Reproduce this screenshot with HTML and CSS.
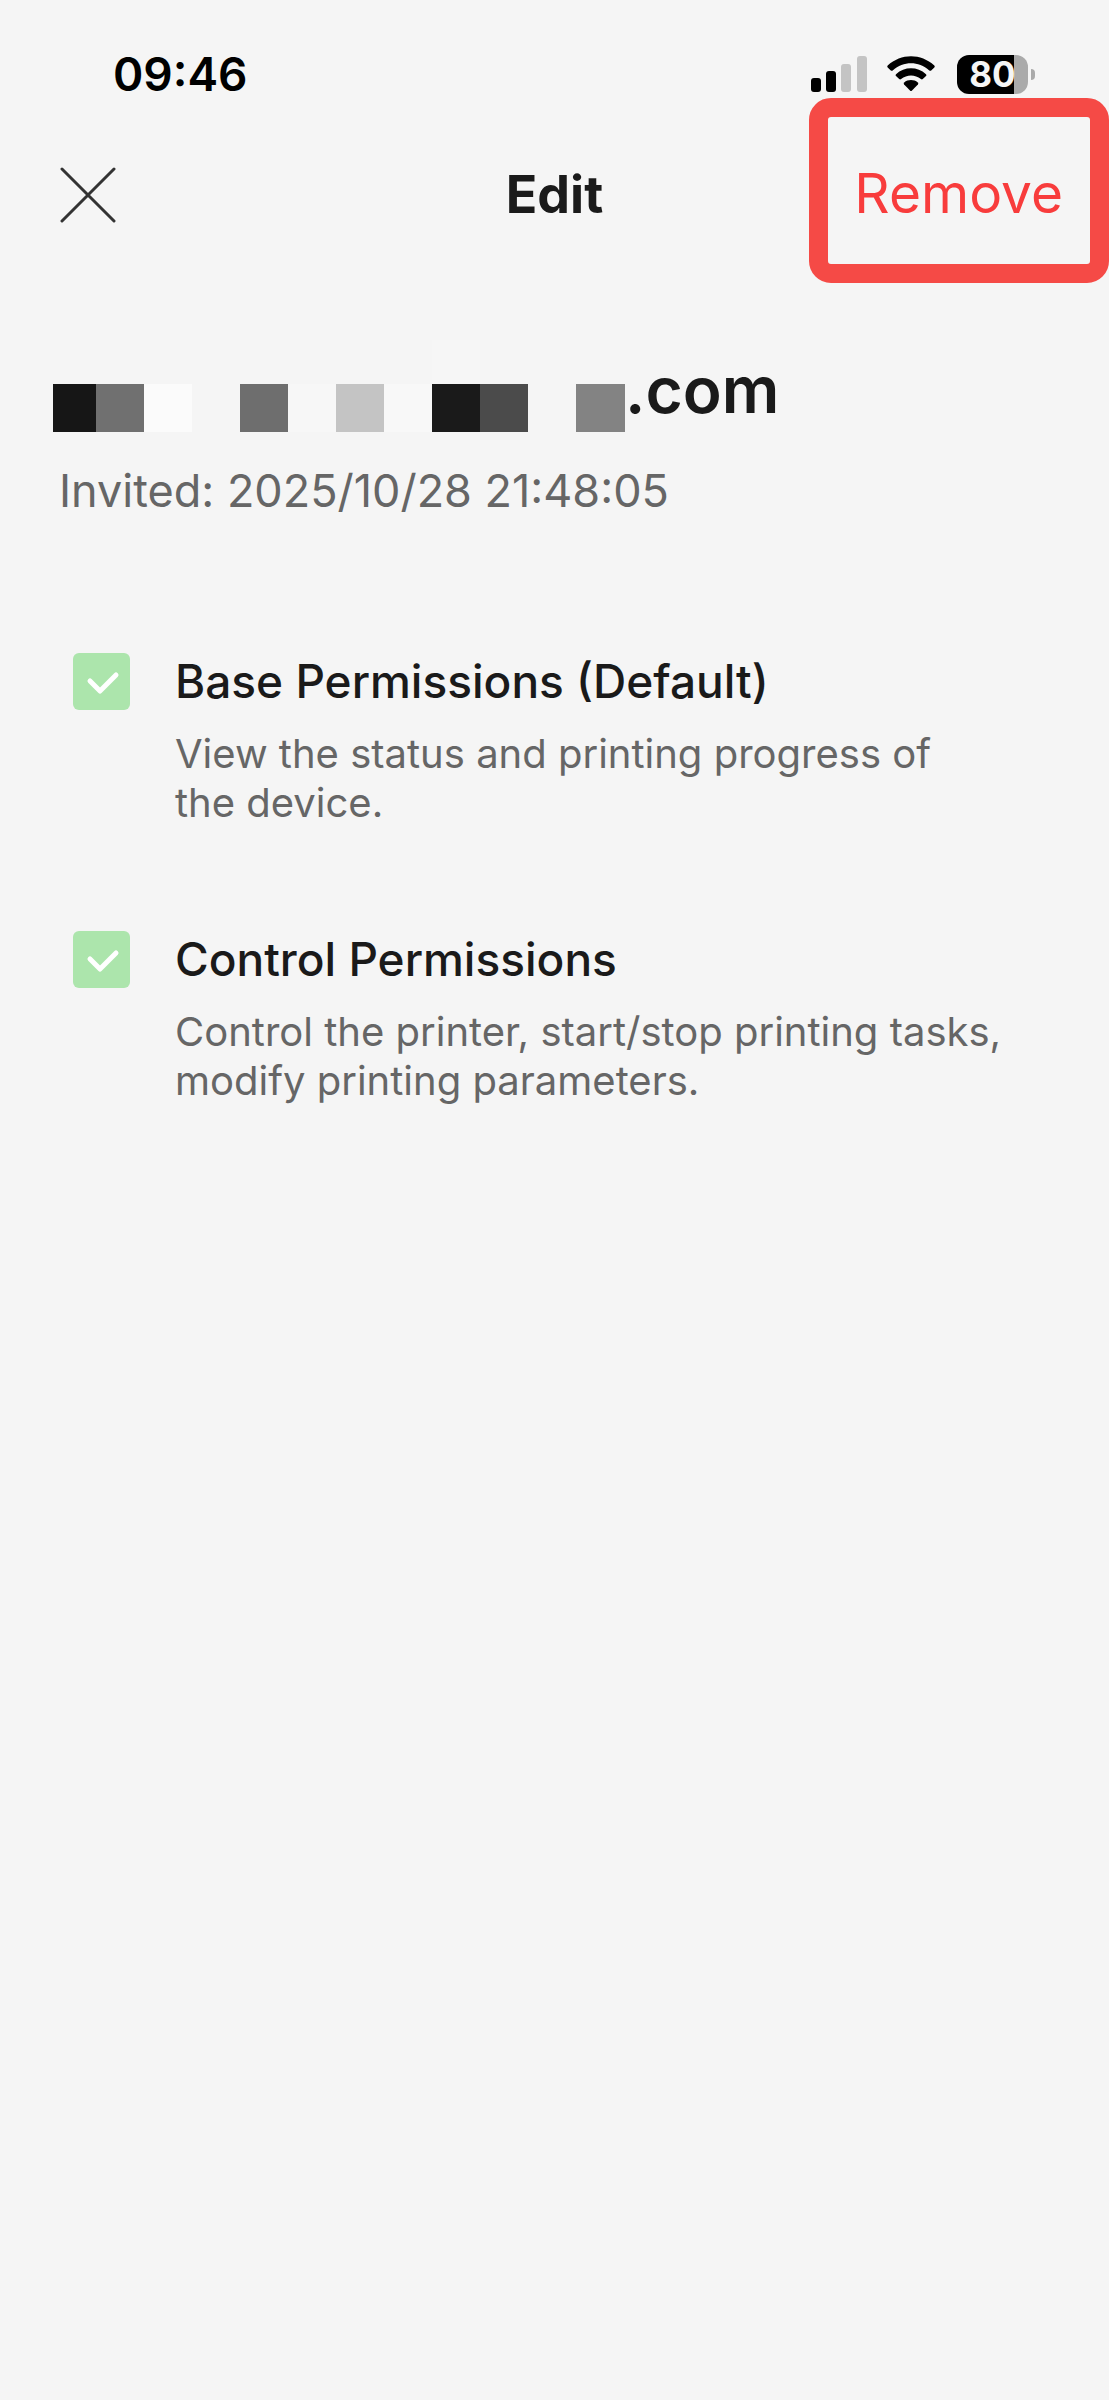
FILE: index.html
```html
<!DOCTYPE html>
<html lang="en">
<head>
<meta charset="utf-8">
<meta name="viewport" content="width=device-width, initial-scale=1">
<title>Edit</title>
<link rel="stylesheet" href="styles.css">
</head>
<body>
<div class="status-bar">
  <span class="time">09:46</span>
  <div class="status-icons">
    <svg class="signal" width="56" height="36" viewBox="0 0 56 36" aria-hidden="true">
      <rect x="0" y="22" width="10" height="14" rx="3"/>
      <rect x="15" y="15" width="10" height="21" rx="3"/>
      <rect class="off" x="30" y="8" width="10" height="28" rx="3"/>
      <rect class="off" x="46" y="0" width="10" height="36" rx="3"/>
    </svg>
    <svg class="wifi" width="48" height="36" viewBox="0 0 48 36" aria-hidden="true">
      <path d="M.7 9.600C14-2.800 34-2.800 47.300 9.600Q48.200 10.600 47.300 11.500L44.200 14.500Q43.300 15.200 42.300 14.400C31.500 4.900 16.500 4.900 5.700 14.400Q4.700 15.200 3.800 14.500L.7 11.500Q-.2 10.600.7 9.600Z"/>
      <path d="M9 18.200C17.500 10.400 30.500 10.400 39 18.200Q40 19.100 39 20L35.800 23.100Q34.900 23.900 33.900 23.100C28 18.300 20 18.300 14.100 23.100Q13.100 23.900 12.200 23.100L9 20Q8 19.100 9 18.200Z"/>
      <path d="M17.200 26.500C21 23.300 27 23.300 30.800 26.500Q31.800 27.400 30.900 28.400L25 34.600Q24 35.600 23 34.600L17.100 28.400Q16.200 27.400 17.200 26.500Z"/>
    </svg>
    <div class="battery"><span class="level">80</span></div>
  </div>
</div>

<header class="header">
  <button class="close" type="button" aria-label="Close">
    <svg width="56" height="56" viewBox="0 0 56 56" aria-hidden="true"><path d="M2 2 54 54M54 2 2 54"/></svg>
  </button>
  <h1>Edit</h1>
  <button class="remove" type="button">Remove</button>
  <div class="highlight"></div>
</header>

<main>
  <section class="member">
    <div class="account">
      <svg class="mask" width="572" height="92" viewBox="0 0 572 92" aria-hidden="true">
        <rect x="379" y="0" width="48" height="44" fill="#f6f6f6"/>
        <rect x="0" y="44" width="43" height="48" fill="#161616"/>
        <rect x="43" y="44" width="48" height="48" fill="#707070"/>
        <rect x="91" y="44" width="48" height="48" fill="#fbfbfb"/>
        <rect x="187" y="44" width="48" height="48" fill="#6e6e6e"/>
        <rect x="235" y="44" width="48" height="48" fill="#f7f7f7"/>
        <rect x="283" y="44" width="48" height="48" fill="#c4c4c4"/>
        <rect x="331" y="44" width="48" height="48" fill="#f8f8f8"/>
        <rect x="379" y="44" width="48" height="48" fill="#1a1a1a"/>
        <rect x="427" y="44" width="48" height="48" fill="#4b4b4b"/>
        <rect x="523" y="44" width="49" height="48" fill="#838383"/>
      </svg>
      <h2>.com</h2>
    </div>
    <p class="invited">Invited: 2025/10/28 21:48:05</p>
  </section>

  <section class="permissions">
    <div class="permission">
      <input type="checkbox" id="base" checked>
      <div class="details">
        <label for="base">Base Permissions (Default)</label>
        <p>View the status and printing progress of<br>the device.</p>
      </div>
    </div>
    <div class="permission">
      <input type="checkbox" id="control" checked>
      <div class="details">
        <label for="control">Control Permissions</label>
        <p>Control the printer, start/stop printing tasks, modify printing parameters.</p>
      </div>
    </div>
  </section>
</main>
</body>
</html>
```
FILE: styles.css
```css
* {
  box-sizing: border-box;
}

body {
  margin: 0;
  min-height: 100vh;
  background: #f5f5f5;
  color: #1a1a1a;
  font-family: Inter, "Liberation Sans", sans-serif;
}

h1, h2, p {
  margin: 0;
}

button {
  padding: 0;
  border: 0;
  background: none;
  font-family: inherit;
}

svg {
  display: block;
}

/* Status bar */
.status-bar {
  display: flex;
  justify-content: space-between;
  align-items: center;
  padding: 50px 74px 0 113px;
  color: #000;
}

.time {
  font-size: 46px;
  font-weight: 600;
  line-height: 48px;
}

.status-icons {
  display: flex;
  align-items: center;
  gap: 20px;
}

.signal .off {
  fill: #c4c4c4;
}

.battery {
  position: relative;
  display: flex;
  justify-content: center;
  width: 71px;
  margin: 0 7px 0 2px;
  border-radius: 12px;
  background: linear-gradient(to right, #000 80%, #aaa 80%);
}

.battery::after {
  content: "";
  position: absolute;
  top: 14px;
  left: 74px;
  width: 4px;
  height: 11px;
  border-radius: 0 4px 4px 0;
  background: #aaa;
}

.level {
  color: #f5f5f5;
  font-size: 35px;
  font-weight: 700;
  line-height: 39px;
}

/* Header */
.header {
  position: relative;
  display: grid;
  grid-template-columns: 1fr auto 1fr;
  align-items: center;
  height: 193px;
  padding: 0 46px;
}

.close {
  justify-self: start;
  padding-left: 14px;
}

.close path {
  stroke: #333;
  stroke-width: 3;
  stroke-linecap: round;
}

h1 {
  font-size: 52px;
  font-weight: 700;
  line-height: 64px;
}

.remove {
  justify-self: end;
  padding-bottom: 4px;
  color: #f83c3c;
  font-size: 55px;
  line-height: 72px;
}

.highlight {
  position: absolute;
  top: 0;
  right: 0;
  width: 300px;
  height: 185px;
  border: 19px solid #f54a46;
  border-radius: 22px;
  pointer-events: none;
}

/* Invited member */
.member {
  padding: 49px 53px 0;
}

.account {
  display: flex;
  align-items: center;
}

h2 {
  padding-top: 8px;
  font-size: 64px;
  font-weight: 600;
  line-height: 80px;
}

.invited {
  padding: 31px 6px 0;
  color: #666;
  font-size: 45px;
  line-height: 56px;
}

/* Permissions */
.permissions {
  display: grid;
  gap: 104px;
  padding: 134px 73px 0;
}

.permission {
  display: flex;
  align-items: flex-start;
  gap: 45px;
}

.permission input {
  flex: none;
  appearance: none;
  width: 57px;
  height: 57px;
  margin: 0;
  border-radius: 6px;
  background: #ace5ac url("data:image/svg+xml,%3Csvg xmlns='http://www.w3.org/2000/svg' viewBox='0 0 57 57'%3E%3Cpath d='M17 28 27 38 43 22' fill='none' stroke='%23fff' stroke-width='5' stroke-linecap='round' stroke-linejoin='round'/%3E%3C/svg%3E");
}

.details {
  display: grid;
  gap: 20px;
}

.details label {
  font-size: 46px;
  font-weight: 500;
  line-height: 56px;
}

.details p {
  color: #666;
  font-size: 40px;
  line-height: 49px;
}
```
